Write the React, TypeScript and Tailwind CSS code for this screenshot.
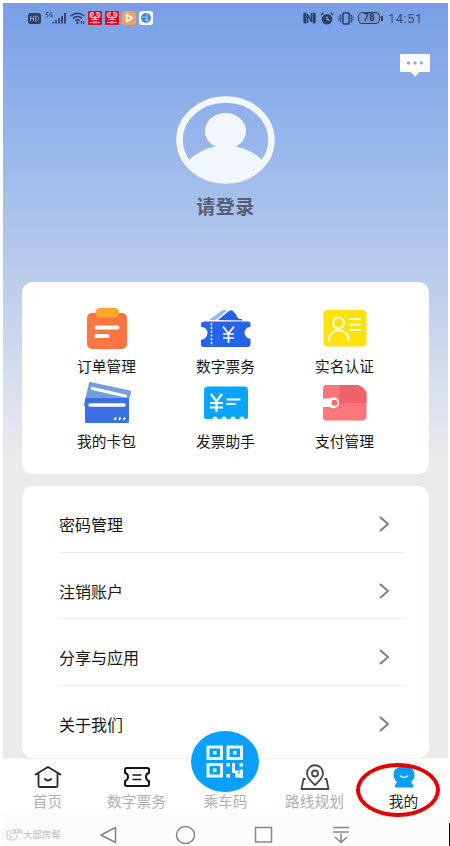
import type { ReactNode } from 'react';

// ── Status bar ────────────────────────────────────────────────────────────────

function RedAppIcon() {
  return (
    <svg width="14" height="14" viewBox="0 0 14 14">
      <rect width="14" height="14" rx="0.8" fill="#d90f2a" />
      <g fill="none" stroke="#ffd9dc" strokeWidth="1.2">
        <path d="M5.8 2.2Q2.2 1.2 2.2 4t4.3 2.6M8.200 2.200Q11.800 1.200 11.800 4T7.500 6.600" />
        <path d="M3.500 4.200h2M8.500 4.200h2M7 5v4M3.500 8.500h7" />
        <path d="M2.500 11.500h2M6 10v2.500M8 10v2.500M9.600 11.500h2" />
      </g>
    </svg>
  );
}

function StatusBar() {
  return (
    <div className="flex h-[30px] items-center justify-between px-[25px] text-[#2c3e66]">
      <div className="flex items-center">
        <svg width="13" height="11" viewBox="0 0 13 11">
          <rect width="13" height="11" rx="2.5" fill="#2f3f66" />
          <path d="M2.6 3v5M5.6 3v5M2.6 5.5h3M7.6 3v5h1c2.4 0 2.4-5 0-5z" fill="none" stroke="#86a4df" strokeWidth="1" />
        </svg>
        <svg className="ml-1" width="22" height="14" viewBox="0 0 22 14">
          <path d="M3.5 1.5H1.3v2c2.5-.3 2.5 2.7 0 2.4M7.3 2C5 .8 4.8 2.5 4.8 3.7S5.6 6 7.3 5.6V4h-1" fill="none" stroke="currentColor" strokeWidth="0.9" />
          <path d="M8 11v1.5M11 9.2v3.3M14 7v5.5M17 4.8v7.7M20 2v10.5" stroke="currentColor" strokeWidth="1.8" />
        </svg>
        <svg className="ml-[3px]" width="15" height="13" viewBox="0 0 15 13">
          <g fill="none" stroke="currentColor" strokeWidth="1.4">
            <path d="M.7 4c4-3.6 9.6-3.6 13.6 0" />
            <path d="M2.9 6.4c3-2.5 6.2-2.5 9.2 0" />
            <path d="M5 8.7c1.7-1.3 3.3-1.3 5 0" />
          </g>
          <circle cx="7.5" cy="10.8" r="1.2" fill="currentColor" />
          <path d="M11.5 9v3M13.7 9v3" stroke="currentColor" strokeWidth="1.1" />
        </svg>
        <div className="ml-[3px] flex gap-[3px]">
          <RedAppIcon />
          <RedAppIcon />
          <svg width="14" height="14" viewBox="0 0 14 14">
            <rect width="14" height="14" rx="3" fill="#f2a35f" />
            <path d="M4.7 3.4 10.3 7l-5.6 3.6z" fill="#f2a35f" stroke="#fff" strokeWidth="1.6" strokeLinejoin="round" />
          </svg>
          <svg width="14" height="14" viewBox="0 0 14 14">
            <rect width="14" height="14" rx="3" fill="#fff" />
            <circle cx="7" cy="7" r="5" fill="#3d86dd" />
            <path d="M3 6.2h5M8 3v8M6 9h4" stroke="#a9d2fa" strokeWidth="1" />
          </svg>
        </div>
      </div>

      <div className="flex items-center">
        <svg width="13" height="12" viewBox="0 0 13 12">
          <path d="M3.3.5h-1a2 2 0 0 0-2 2v7a2 2 0 0 0 2 2h1zM9.7.5h1a2 2 0 0 1 2 2v7a2 2 0 0 1-2 2h-1z" fill="currentColor" />
          <path d="M4.5 11V2l4 8V1" fill="none" stroke="currentColor" strokeWidth="1.5" />
        </svg>
        <svg className="ml-1" width="14" height="13" viewBox="0 0 14 13">
          <circle cx="7" cy="7.2" r="5.3" fill="currentColor" />
          <path d="M.8 3 3.3.9M13.2 3 10.7.9" stroke="currentColor" strokeWidth="1.4" />
          <path d="M7 4.2v3.2l2.4 1" fill="none" stroke="#8aa9e4" strokeWidth="1.2" />
        </svg>
        <svg className="ml-1" width="16" height="13" viewBox="0 0 16 13">
          <rect x="5" y="1" width="6" height="11" rx="0.5" fill="none" stroke="currentColor" strokeWidth="1.5" />
          <path d="M2.6 2.8v7.4M13.4 2.8v7.4" stroke="currentColor" strokeWidth="1.5" strokeDasharray="2 .7" />
          <path d="M1 4.5v4M15 4.5v4" stroke="currentColor" strokeWidth="1" strokeDasharray="1.6 .6" />
        </svg>
        <div className="ml-1 flex h-[12px] w-[22px] items-center justify-center rounded-[4px] border border-[#2c3e66] bg-[#7b97d0] font-[Roboto,sans-serif] text-[10px] font-bold leading-none">
          78
        </div>
        <div className="ml-px h-[5px] w-[2px] bg-[#2c3e66]" />
        <div className="ml-[5px] w-[35px] whitespace-nowrap font-[Roboto,sans-serif] text-[13px] leading-none tracking-[0.5px] text-[#3a4c74]">
          14:51
        </div>
      </div>
    </div>
  );
}

// ── Shortcut grid ─────────────────────────────────────────────────────────────

function OrderIcon() {
  return (
    <svg width="52" height="46" viewBox="0 0 52 46">
      <rect x="6" y="8" width="40" height="36" rx="5" fill="#ff7541" />
      <rect x="14.5" y="3" width="23.500" height="9.5" rx="4.5" fill="#ffa62c" />
      <path d="M15.5 22.5h21M15.5 31h11" stroke="#fff" strokeWidth="4" strokeLinecap="round" />
    </svg>
  );
}

function TicketIcon() {
  return (
    <svg width="52" height="46" viewBox="0 0 52 46">
      <path d="M9 15 22 5.5q3-1.500 5 0L16 15z" fill="#9db9f4" />
      <path d="M18 15 29 6q2-1.500 4 0l3.500 4q.2 4 5 4l1.500 1.500z" fill="#265fe3" />
      <path d="M5 16.500h43q2.500 0 2.500 2.500v2.700a6 6 0 0 0 0 12V39q0 3-3 3h-44q-2.500 0-2.500-3v-4.300a6.500 6.500 0 0 0 0-13V19q0-2.500 4-2.500z" fill="#2763ea" />
      <path d="M11.500 18v23" stroke="#fff" strokeWidth="1.5" strokeDasharray="2.2 1.6" />
      <path d="m23 21.500 5.500 7 5.500-7M28.500 28v10M23 29h11M23 33h11" fill="none" stroke="#fff" strokeWidth="1.7" />
    </svg>
  );
}

function IdentityIcon() {
  return (
    <svg width="52" height="46" viewBox="0 0 52 46">
      <rect x="4.5" y="5" width="43" height="36.5" rx="4" fill="#ffe10d" />
      <g fill="none" stroke="#fffad2" strokeWidth="2.2" strokeLinecap="round">
        <circle cx="19.5" cy="18" r="5.5" />
        <path d="M10 35.500c0-13.500 19.500-13.500 19.500 0M31 14h10M31 19.500h10M31 25h10" />
      </g>
    </svg>
  );
}

function CardsIcon() {
  return (
    <svg width="52" height="46" viewBox="0 0 52 46">
      <path d="m9.500 2 39.500 8.500q1.500.5 1 2L44 35 2.500 26 8 3q.4-1.200 1.500-1z" fill="#70a0dc" />
      <path d="m11.500 8.500 33 7.500" stroke="#fff" strokeWidth="3.3" strokeLinecap="round" />
      <rect x="4" y="18" width="44" height="25" rx="1.5" fill="#3d6fe4" />
      <path d="M9 25h34" stroke="#fff" strokeWidth="3.4" strokeLinecap="round" />
      <path d="m33.500 40 1.500-2.500m3 2.500 1.500-2.500m3 2.500 1.500-2.500" stroke="#fff" strokeWidth="1.8" />
    </svg>
  );
}

function InvoiceIcon() {
  return (
    <svg width="52" height="46" viewBox="0 0 52 46">
      <path d="M8 6.500h36q4 0 4 4V37q0 2-2 2h-1.500a2.500 2.500 0 0 0-5 0h-4a2.500 2.500 0 0 0-5 0h-4a2.500 2.500 0 0 0-5 0h-4a2.500 2.500 0 0 0-5 0H6q-2 0-2-2V10.500q0-4 4-4z" fill="#0ba4fb" />
      <path d="m11 14 5.500 7.500L22 14M16.500 21.500v10.500M10 23h13M10 27.500h13" fill="none" stroke="#fff" strokeWidth="2.2" />
      <path d="M26.500 19.500h14M26.500 24h9.500" stroke="#fff" strokeWidth="2" />
    </svg>
  );
}

function WalletIcon() {
  return (
    <svg width="52" height="46" viewBox="0 0 52 46">
      <path d="M7 5h30q4 0 8 4 2.500 2 2.500 6v21q0 4.500-4.500 4.500H7q-3 0-3-3V8q0-3 3-3z" fill="#fb767b" />
      <path d="M20.500 5H37q4 0 8 4 2.500 2 2.500 6v8h-27z" fill="#ee626b" />
      <path d="M3.500 18.500h7.500a5.500 5.500 0 1 1 0 8.500H3.500z" fill="#fff" />
      <circle cx="15.500" cy="22.7" r="3" fill="#f56a72" />
    </svg>
  );
}

const SHORTCUTS: { label: string; icon: ReactNode }[] = [
  { label: '订单管理', icon: <OrderIcon /> },
  { label: '数字票务', icon: <TicketIcon /> },
  { label: '实名认证', icon: <IdentityIcon /> },
  { label: '我的卡包', icon: <CardsIcon /> },
  { label: '发票助手', icon: <InvoiceIcon /> },
  { label: '支付管理', icon: <WalletIcon /> },
];

const SETTINGS = ['密码管理', '注销账户', '分享与应用', '关于我们'];

// ── Bottom navigation ─────────────────────────────────────────────────────────

function NavItem({ label, icon, active = false }: { label: string; icon: ReactNode; active?: boolean }) {
  return (
    <div className="flex flex-1 flex-col items-center pt-1">
      <div className="flex h-[28px] items-center">{icon}</div>
      <div className={active ? 'text-[14.7px] leading-5 text-[#222222]' : 'text-[14.7px] leading-5 text-[#b0b0b0]'}>
        {label}
      </div>
    </div>
  );
}

function QrIcon() {
  return (
    <svg width="38" height="34" viewBox="0 0 38 34" fill="none" stroke="#e9fbff">
      <g strokeWidth="3">
        <rect x="2" y="2" width="13.5" height="11.5" />
        <rect x="22" y="2" width="13.5" height="11.5" />
        <rect x="2" y="19.5" width="13.5" height="11.5" />
      </g>
      <g fill="#e9fbff" stroke="none">
        <rect x="7" y="6" width="3.5" height="3.5" />
        <rect x="27" y="6" width="3.5" height="3.5" />
        <rect x="7" y="23.5" width="3.5" height="3.5" />
        <path d="M20.500 18h3.500v3.500h-3.500zM33.500 18H37v3.500h-3.500zM20.500 29H24v3.500h-3.500zM26 18h3v7.500h3.500V29H37v3.500h-8V28h-3zM33.500 24.500H37V33h-3.500z" />
      </g>
    </svg>
  );
}

function BottomNav() {
  return (
    <div className="relative flex h-[55px] shrink-0 border-t border-[#f2f2f2] bg-white">
      <NavItem
        label="首页"
        icon={
          <svg width="28" height="24" viewBox="0 0 28 24" fill="none" stroke="#292929" strokeWidth="1.8" strokeLinecap="round" strokeLinejoin="round">
            <path d="M1.500 9.500 14 2l12.500 7.500M4.500 8v12.200q0 1.800 1.800 1.800h15.400q1.800 0 1.800-1.800V8" />
            <path d="M11 14q3 3 6 0" />
          </svg>
        }
      />
      <NavItem
        label="数字票务"
        icon={
          <svg width="28" height="24" viewBox="0 0 28 24" fill="none" stroke="#161616" strokeWidth="2">
            <path d="M3.500 3h21q1.500 0 1.500 1.500v3.300q-3 1.200-3 4.200t3 4.200v3.300q0 1.500-1.500 1.500h-21Q2 21 2 19.500v-3.300q3-1.200 3-4.200T2 7.800V4.500Q2 3 3.500 3z" />
            <path d="M9.500 10h9M9.500 14.500h9" strokeWidth="1.7" />
          </svg>
        }
      />
      <NavItem label="乘车码" icon={null} />
      <NavItem
        label="路线规划"
        icon={
          <svg width="30" height="27" viewBox="0 0 30 27" fill="none" stroke="#484848" strokeWidth="1.8" strokeLinejoin="round">
            <path d="M15 21Q7 14 7 9.500c0-11 16-11 16 0Q23 14 15 21z" />
            <circle cx="15" cy="9.5" r="3" />
            <path d="M5.500 15h-2L1.500 25h27l-2-10h-2" />
          </svg>
        }
      />
      <NavItem
        active
        label="我的"
        icon={
          <svg width="24" height="22" viewBox="0 0 24 22">
            <path d="M7 1h10q5.500 2 5.500 7.500 0 4.500-3.500 7.500l2 3v2.500H3V19l2-3Q1.500 13 1.500 8.500 1.500 3 7 1z" fill="#0b9df4" />
            <path d="M8.500 10q3.500 3 7 0" fill="none" stroke="#dff5ff" strokeWidth="1.6" strokeLinecap="round" />
          </svg>
        }
      />

      {/* Raised ride code button */}
      <div className="absolute -top-[28px] left-[188px] flex h-[61px] w-[68px] items-center justify-center rounded-[50%] bg-[#08a0fb]">
        <QrIcon />
      </div>

      {/* Highlight ring around the active tab */}
      <div className="absolute left-[353px] top-[4px] h-[54px] w-[84px] rounded-[50%] border-4 border-[#e60000]" />
    </div>
  );
}

function SystemBar() {
  return (
    <div className="flex h-[33px] shrink-0 items-center bg-[#fcfcfc] pt-[10px]">
      <div className="flex w-[60px] items-center pl-[3px] text-[#b8b8b8]">
        <svg width="17" height="14" viewBox="0 0 17 14" fill="none" stroke="currentColor" strokeWidth="0.8">
          <path d="M3 3H1v7q2 2 5 2 5 0 5-5M4 6v3h3" />
          <circle cx="7" cy="3.5" r="2" />
          <circle cx="11" cy="3" r="2" />
          <circle cx="14.5" cy="3.5" r="1.7" />
        </svg>
        <span className="whitespace-nowrap text-[9.5px] leading-none">大邸房帮</span>
      </div>
      <svg className="ml-[36px]" width="18" height="20" viewBox="0 0 18 20">
        <path d="M16.500 2.500v15L2 10z" fill="none" stroke="#858585" strokeWidth="1.5" strokeLinejoin="round" />
      </svg>
      <svg className="ml-[58px]" width="20" height="20" viewBox="0 0 20 20">
        <ellipse cx="10.500" cy="10" rx="9" ry="8.5" fill="none" stroke="#858585" strokeWidth="1.5" />
      </svg>
      <svg className="ml-[59px]" width="20" height="20" viewBox="0 0 20 20">
        <rect x="1.500" y="2.500" width="16" height="14.5" fill="none" stroke="#858585" strokeWidth="1.5" />
      </svg>
      <svg className="ml-[57px]" width="20" height="20" viewBox="0 0 20 20">
        <path d="M2 2.500h16M2 7h16M10 8.500V17M4 12l6 5.500 6-5.500" fill="none" stroke="#858585" strokeWidth="1.5" />
      </svg>
    </div>
  );
}

// ── Main Screen ───────────────────────────────────────────────────────────────

export default function App() {
  return (
    <div className="relative h-[846px] w-[450px] overflow-hidden bg-white pl-[3px] pr-[2px] pt-[3px] font-['Noto_Sans_CJK_SC',sans-serif]">
      <div className="flex h-[843px] flex-col bg-[linear-gradient(180deg,#779fe7_0px,#8caee9_90px,#a7c0ec_200px,#c6d4ec_320px,#e2e5ee_420px,#ecebea_465px)]">
        <StatusBar />

        {/* Messages */}
        <div className="flex h-[60px] justify-end pr-[18px] pt-[21px]">
          <svg width="30" height="23" viewBox="0 0 30 23">
            <path d="M1 0h28q1 0 1 1v16q0 1-1 1h-9.500L15 22.700 10.500 18H1q-1 0-1-1V1q0-1 1-1z" fill="#fff" />
            <g fill="#8caeea">
              <circle cx="8.5" cy="9" r="1.7" />
              <circle cx="15" cy="9" r="1.7" />
              <circle cx="21.5" cy="9" r="1.7" />
            </g>
          </svg>
        </div>

        {/* Profile */}
        <div className="flex h-[189px] flex-col items-center pt-[2px]">
          <svg width="100" height="89" viewBox="0 0 100 89">
            <ellipse cx="49.5" cy="45" rx="46" ry="40.5" fill="none" stroke="#f2f7fe" strokeWidth="6.5" />
            <ellipse cx="49.5" cy="36" rx="20.5" ry="18" fill="#f2f7fe" />
            <path d="M12 66Q24 54 40 51.500h19q16 2.500 28 14.500Q76 87 50 87T12 66z" fill="#f2f7fe" />
          </svg>
          <div className="mt-[8px] text-[19px] font-bold leading-7 tracking-[0.5px] text-[#535f74]">请登录</div>
        </div>

        {/* Shortcuts */}
        <div className="mx-[19px] grid h-[192px] shrink-0 grid-cols-3 content-start rounded-[11px] bg-white px-[25px] pt-[23px]">
          {SHORTCUTS.map(item => (
            <div key={item.label} className="flex h-[75px] flex-col items-center">
              <div className="h-[46px]">{item.icon}</div>
              <div className="mt-1 text-[14.7px] leading-[22px] text-[#171717]">{item.label}</div>
            </div>
          ))}
        </div>

        {/* Settings */}
        <div className="mx-[19px] mt-3 h-[272px] shrink-0 overflow-hidden rounded-[11px] bg-white pl-[37px] pr-[24px]">
          {SETTINGS.map(label => (
            <div
              key={label}
              className="flex h-[66.7px] items-center justify-between border-b border-[#eeeeee] pr-[15px] pt-[10px] last:border-0"
            >
              <span className="text-[16px] leading-6 text-[#171717]">{label}</span>
              <svg width="12" height="16" viewBox="0 0 12 16">
                <path d="m2 1 8 7-8 7" fill="none" stroke="#808080" strokeWidth="2" />
              </svg>
            </div>
          ))}
        </div>

        <BottomNav />
        <SystemBar />
      </div>
      <div className="absolute bottom-0 right-0 h-[23px] w-px bg-black" />
    </div>
  );
}
